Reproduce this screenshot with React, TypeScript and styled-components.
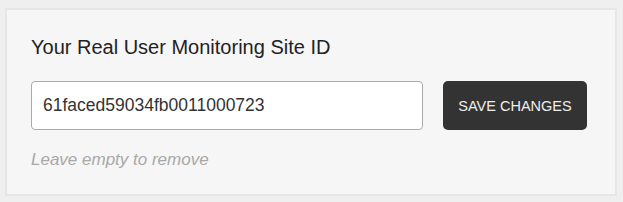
import React from "react";
import styled, { createGlobalStyle } from "styled-components";

const Global = createGlobalStyle`
  html, body { margin: 0; padding: 0; background: #efefef; }
  body { font-family: "Liberation Sans", Arial, sans-serif; }
`;

const Page = styled.div`
  padding: 8px 6px 6px 5px;
`;

const Panel = styled.section`
  background: #f6f6f6;
  border: 2px solid #e6e6e6;
  padding: 25px 24px 24px 24px;
  height: 188px;
  box-sizing: border-box;
`;

const Title = styled.h2`
  margin: 0 0 22px 0;
  font-size: 20px;
  font-weight: 400;
  color: #222;
  line-height: 24px;
`;

const Row = styled.div`
  display: flex;
  align-items: stretch;
  gap: 20px;
`;

const Input = styled.input`
  width: 392px;
  height: 49px;
  box-sizing: border-box;
  border: 1px solid #aaaaaa;
  border-radius: 4px;
  background: #fff;
  padding: 0 11px;
  font-family: "Liberation Sans", Arial, sans-serif;
  font-size: 17.5px;
  color: #333;
  outline: none;
`;

const Button = styled.button`
  width: 144px;
  height: 49px;
  border: none;
  border-radius: 5px;
  background: #333333;
  color: #eeeeee;
  font-family: "Liberation Sans", Arial, sans-serif;
  font-size: 14.5px;
  text-transform: uppercase;
  cursor: pointer;
`;

const Hint = styled.p`
  margin: 19px 0 0 0;
  font-size: 17px;
  font-style: italic;
  color: #a8a8a8;
  line-height: 22px;
`;

export default function App() {
  return (
    <>
      <Global />
      <Page>
        <Panel>
          <Title>Your Real User Monitoring Site ID</Title>
          <Row>
            <Input defaultValue="61faced59034fb0011000723" />
            <Button>Save Changes</Button>
          </Row>
          <Hint>Leave empty to remove</Hint>
        </Panel>
      </Page>
    </>
  );
}
